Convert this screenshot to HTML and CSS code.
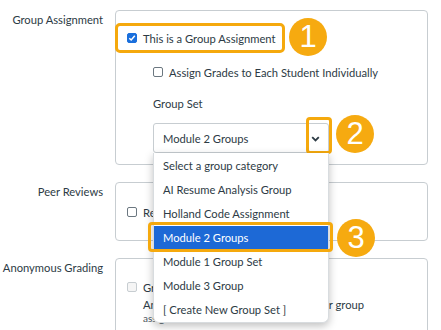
FILE: index.html
```html
<!DOCTYPE html>
<html lang="en">
<head>
    <meta charset="UTF-8">
    <meta name="viewport" content="width=device-width, initial-scale=1.0">
    <title>Group Assignment Settings</title>
    <link rel="stylesheet" href="styles.css">
</head>
<body>

    <div class="page">
        <div class="row">
            <div class="label">Group Assignment</div>
            <div class="panel panel-group">
                <div class="check-row main-check">
                    <span class="box checked">
                        <svg width="8" height="8" viewBox="0 0 8 8"><path d="M1.3 4.2 L3.2 6 L6.8 1.8" fill="none" stroke="#fff" stroke-width="1.5"/></svg>
                    </span>
                    This is a Group Assignment
                    <span class="step step-1">1</span>
                </div>
                <div class="sub">
                    <div class="check-row">
                        <span class="box"></span>
                        Assign Grades to Each Student Individually
                    </div>
                    <div class="field-label">Group Set</div>
                    <div class="select-wrap">
                        <div class="select">
                            Module 2 Groups
                            <svg class="chevron" width="9" height="6" viewBox="0 0 9 6"><path d="M1.2 1.2 L4.5 4.5 L7.8 1.2" fill="none" stroke="#2d3b45" stroke-width="1.8"/></svg>
                        </div>
                        <span class="arrow-mark"></span>
                        <span class="step step-2">2</span>
                        <ul class="options">
                            <li>Select a group category</li>
                            <li>AI Resume Analysis Group</li>
                            <li>Holland Code Assignment</li>
                            <li class="selected">Module 2 Groups<span class="step step-3">3</span></li>
                            <li>Module 1 Group Set</li>
                            <li>Module 3 Group</li>
                            <li>[ Create New Group Set ]</li>
                        </ul>
                    </div>
                </div>
            </div>
        </div>

        <div class="row">
            <div class="label">Peer Reviews</div>
            <div class="panel panel-peer">
                <div class="check-row">
                    <span class="box"></span>
                    Require Peer Reviews
                </div>
            </div>
        </div>

        <div class="row">
            <div class="label">Anonymous Grading</div>
            <div class="panel panel-anon">
                <div class="check-row disabled">
                    <span class="box"></span>
                    Graders cannot view student names
                </div>
                <p class="hint">Anonymous grading is not available for group<br><span class="hint-small">assignments</span></p>
            </div>
        </div>
    </div>

</body>
</html>
```

FILE: styles.css
```css
* {
    margin: 0;
    padding: 0;
    box-sizing: border-box;
}
body {
    font-family: Lato, "Open Sans", sans-serif;
    font-size: 11.2px;
    color: #2d3b45;
    background: #fff;
    overflow: hidden;
}
.page {
    padding-top: 10px;
}
.row {
    display: grid;
    grid-template-columns: 115px 313px;
    margin-bottom: 17px;
}
.label {
    text-align: right;
    padding-right: 12px;
    line-height: 20px;
}
.panel {
    border: 1px solid #c7cdd1;
    border-radius: 4px;
    padding-left: 11px;
}
.panel-group {
    height: 155px;
    padding-top: 12px;
}
.panel-peer {
    height: 59px;
    padding-top: 19px;
}
.panel-anon {
    height: 120px;
    padding-top: 18px;
}
.check-row {
    display: flex;
    align-items: center;
    gap: 6px;
    height: 20px;
    white-space: nowrap;
}
.box {
    width: 10px;
    height: 10px;
    border: 1px solid #6b7780;
    border-radius: 2px;
    background: #fff;
    display: flex;
    align-items: center;
    justify-content: center;
    flex: none;
}
.box.checked {
    background: #1a6fdc;
    border-color: #1a6fdc;
}
.disabled .box {
    border-color: #c7cdd1;
    background: #f5f5f5;
}
/* highlighted main checkbox */
.main-check {
    position: relative;
    margin-left: -12px;
    width: 170px;
    height: 30px;
    padding-left: 9px;
    border: 3px solid #f5a90d;
    border-radius: 5px;
    background: #fff;
}
.sub {
    padding-left: 26px;
}
.sub .check-row {
    margin-top: 9px;
}
.field-label {
    margin-top: 12px;
    line-height: 20px;
}
.select-wrap {
    position: relative;
    margin-top: 9px;
    width: 176px;
}
.select {
    height: 30px;
    border: 1px solid #c7cdd1;
    border-radius: 3px;
    display: flex;
    align-items: center;
    justify-content: space-between;
    padding: 0 8px 0 9px;
    background: #fff;
}
.chevron {
    margin-top: 1px;
}
.arrow-mark {
    position: absolute;
    left: 153px;
    top: -6px;
    width: 26px;
    height: 37px;
    border: 3px solid #f5a90d;
    border-radius: 4px;
}
.options {
    list-style: none;
    position: absolute;
    left: 0;
    top: 30px;
    width: 176px;
    padding-top: 1px;
    background: #fff;
    border: 1px solid #d8dcdf;
    border-top: none;
    border-radius: 0 0 6px 6px;
    box-shadow: 0 3px 8px rgba(0, 0, 0, 0.25);
    z-index: 2;
}
.options li {
    position: relative;
    height: 24px;
    line-height: 24px;
    padding-left: 9px;
    white-space: nowrap;
}
.options li.selected {
    background: #1d69d6;
    color: #fff;
}
.options li.selected::after {
    content: "";
    position: absolute;
    left: -6px;
    right: -5px;
    top: -4px;
    bottom: -2px;
    border: 3px solid #f5a90d;
    border-radius: 4px;
}
/* numbered step badges */
.step {
    position: absolute;
    width: 38px;
    height: 38px;
    border-radius: 50%;
    background: #f6aa10;
    color: #fff;
    font-family: "Liberation Sans", Arial, sans-serif;
    font-size: 31px;
    line-height: 38px;
    text-align: center;
    z-index: 3;
}
.step-1 {
    left: 171px;
    top: -8px;
}
.step-2 {
    left: 183px;
    top: -8px;
}
.step-3 {
    left: 183px;
    top: -7px;
}
.hint {
    padding-left: 16px;
    line-height: 13px;
    margin-top: 1px;
}
.hint-small {
    font-size: 10px;
    color: #4a565e;
}
```
